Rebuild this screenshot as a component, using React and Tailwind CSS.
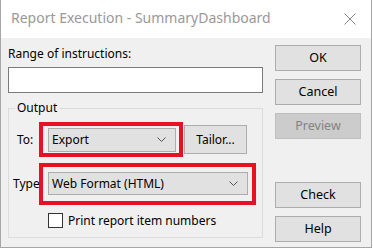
import React from 'react';

const font = { fontFamily: '"Noto Sans", "Open Sans", sans-serif' };

function Chevron() {
  return (
    <svg width="9" height="5" viewBox="0 0 9 5" className="block">
      <polyline points="0.5,0.5 4.5,4.5 8.5,0.5" fill="none" stroke="#555" strokeWidth="1" />
    </svg>
  );
}

function WinButton({ children, disabled, className = '' }) {
  return (
    <button
      type="button"
      disabled={disabled}
      className={`w-[86px] h-[26px] border text-[12.5px] leading-none ${
        disabled
          ? 'bg-[#cccccc] border-[#bfbfbf] text-[#838383]'
          : 'bg-[#e1e1e1] border-[#adadad] text-black'
      } ${className}`}
    >
      {children}
    </button>
  );
}

export default function App() {
  return (
    <div className="w-[373px] h-[249px] bg-white overflow-hidden text-black" style={font}>
      <div className="relative w-[372px] h-[248px] border-x border-b border-[#a6a6a6] bg-[#f0f0f0] flex flex-col">
        {/* title bar */}
        <div className="h-[38px] bg-white flex items-center justify-between pl-[10px] pr-[15px] shrink-0">
          <span className="text-[14px] text-[#999999] leading-none pb-[2px]">Report Execution - SummaryDashboard</span>
          <svg width="12" height="12" viewBox="0 0 12 12">
            <path d="M0.5 0.5 L11.5 11.5 M11.5 0.5 L0.5 11.5" stroke="#8a8a8a" strokeWidth="1" />
          </svg>
        </div>

        {/* body */}
        <div className="flex flex-1 pl-[7px] pr-[10px] text-[12px]">
          <div className="w-[255px] flex flex-col pt-[8px]">
            <div className="leading-[16px]">Range of instructions:</div>
            <div className="mt-[5px] h-[26px] bg-white border border-[#7a7a7a]" />

            <fieldset className="mt-[7px] h-[138px] border border-[#dcdcdc] px-0">
              <legend className="ml-[6px] px-[2px] leading-[16px]">Output</legend>

              <div className="flex items-center pl-[4px] mt-[9px] h-[29px]">
                <span className="w-[35px] pl-[4px]">To:</span>
                <div className="w-[128px] h-[24px] bg-[#e1e1e1] border border-[#adadad] flex items-center justify-between pl-[3px] pr-[9px]">
                  <span>Export</span>
                  <Chevron />
                </div>
                <button type="button" className="ml-[8px] w-[63px] h-[29px] bg-[#e1e1e1] border border-[#adadad]">
                  Tailor...
                </button>
              </div>

              <div className="flex items-center pl-[4px] mt-[18px] h-[23px]">
                <span className="w-[35px]">Type:</span>
                <div className="w-[200px] h-[23px] bg-[#e1e1e1] border border-[#adadad] flex items-center justify-between pl-[3px] pr-[9px]">
                  <span>Web Format (HTML)</span>
                  <Chevron />
                </div>
              </div>

              <div className="flex items-center pl-[39px] mt-[18px] h-[15px]">
                <span className="w-[15px] h-[15px] bg-white border border-[#333333]" />
                <span className="ml-[5px]">Print report item numbers</span>
              </div>
            </fieldset>
          </div>

          <div className="ml-[12px] flex flex-col pt-[7px]">
            <WinButton>OK</WinButton>
            <WinButton className="mt-[8px]">Cancel</WinButton>
            <WinButton disabled className="mt-[8px]">Preview</WinButton>
            <WinButton className="mt-[43px]">Check</WinButton>
            <WinButton className="mt-[8px]">Help</WinButton>
          </div>
        </div>

        {/* red highlight annotations */}
        <div className="absolute left-[38px] top-[122px] w-[144px] h-[35px] border-4 border-[#e81123] pointer-events-none" />
        <div className="absolute left-[38px] top-[163px] w-[217px] h-[42px] border-4 border-[#e81123] pointer-events-none" />
      </div>
    </div>
  );
}
